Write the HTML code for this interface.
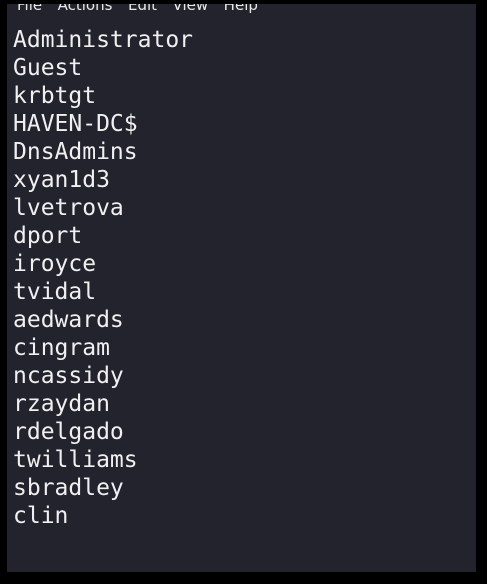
<!DOCTYPE html>
<html><head><style>
html,body{margin:0;padding:0;background:#000;width:487px;height:584px;overflow:hidden}
.win{position:absolute;left:7px;top:4px;width:469px;height:568px;background:#22232d;overflow:hidden}
.menu{position:absolute;left:10px;top:-8px;font:15px "DejaVu Sans","Liberation Sans",sans-serif;color:#e8e8e8;white-space:pre;word-spacing:3px}
.txt{position:absolute;left:6px;top:22px;font:23px/28px "DejaVu Sans Mono","Liberation Mono",monospace;color:#f0f0f0;white-space:pre}
</style></head><body>
<div class="win">
<div class="menu">File  Actions  Edit  View  Help</div>
<div class="txt">Administrator
Guest
krbtgt
HAVEN-DC$
DnsAdmins
xyan1d3
lvetrova
dport
iroyce
tvidal
aedwards
cingram
ncassidy
rzaydan
rdelgado
twilliams
sbradley
clin</div>
</div>
</body></html>
